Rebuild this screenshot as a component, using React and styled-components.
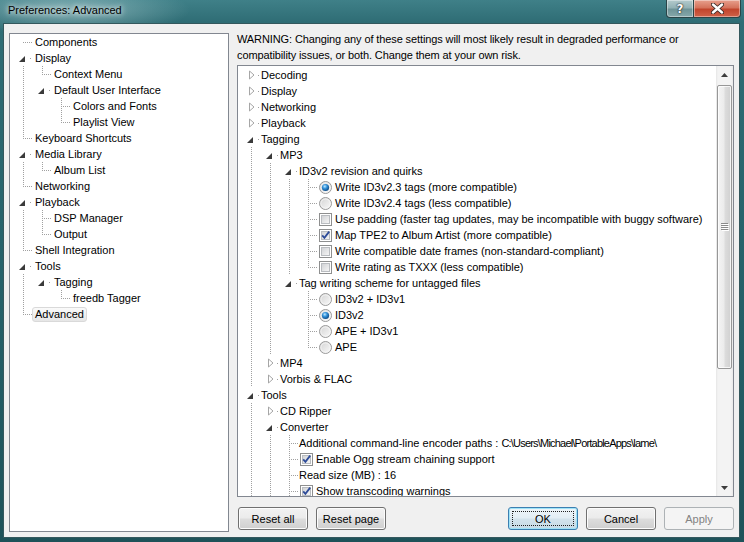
import React from 'react';
import styled, { createGlobalStyle, css } from 'styled-components';

const GlobalStyle = createGlobalStyle`
  html, body { margin: 0; padding: 0; }
  body { width: 744px; height: 542px; overflow: hidden; background: #1f565e; }
  * { box-sizing: border-box; }
`;

const FONT = `"Liberation Sans", Arial, sans-serif`;

const Window = styled.div`
  width: 744px;
  height: 542px;
  display: flex;
  flex-direction: column;
  padding: 0 4px 4px 3px;
  background:
    radial-gradient(ellipse 120px 26px at 70px 10px, rgba(190, 220, 222, 0.55), rgba(190, 220, 222, 0) 100%),
    linear-gradient(180deg, #3f8088 0px, #2f6d75 22px, #245f67 60%, #1e5259 100%);
  font-family: ${FONT};
  font-size: 11px;
  color: #000;
`;

const TitleBar = styled.div`
  height: 23px;
  flex: none;
  display: flex;
  align-items: flex-start;
  justify-content: space-between;
  padding-left: 5px;
`;

const Title = styled.span`
  font-family: ${FONT};
  font-size: 11px;
  line-height: 20px;
  color: #000;
  text-shadow: 0 0 5px rgba(255, 255, 255, 0.9), 0 0 9px rgba(255, 255, 255, 0.7);
`;

const CaptionGroup = styled.div`
  display: flex;
  margin-right: -1px;
`;

const CaptionButton = styled.div`
  width: ${(p) => p.$w}px;
  height: 18px;
  display: flex;
  align-items: center;
  justify-content: center;
  border: 1px solid #2a4447;
  border-top: none;
  box-shadow: inset 0 0 0 1px rgba(255, 255, 255, 0.4);
  color: #fff;
  font: bold 12px "DejaVu Sans", sans-serif;
  text-shadow: 0 0 2px #1a1a1a, 0 0 1px #000;
  ${(p) =>
    p.$close
      ? css`
          border-bottom-right-radius: 4px;
          border-left: none;
          background: linear-gradient(180deg, #e7a08e 0%, #d5735c 45%, #c1452d 55%, #cf6248 100%);
        `
      : css`
          border-bottom-left-radius: 4px;
          background: linear-gradient(180deg, #b4cbcd 0%, #93b2b5 45%, #6f9498 55%, #86a8ab 100%);
        `}
`;

const Client = styled.div`
  flex: 1;
  min-height: 0;
  display: flex;
  gap: 8px;
  padding: 7px 5px 5px 5px;
  background: #f0f0f0;
  border: 1px solid #34585d;
`;

const LeftTree = styled.div`
  width: 220px;
  flex: none;
  margin-top: 2px;
  border: 1px solid #828790;
  background: #fff;
  padding-left: 4px;
  overflow: hidden;
`;

const RightColumn = styled.div`
  flex: 1;
  min-width: 0;
  display: flex;
  flex-direction: column;
`;

const Warning = styled.p`
  margin: 0 0 2px 0;
  line-height: 16px;
  white-space: nowrap;
  letter-spacing: -0.11px;
`;

const ListBox = styled.div`
  flex: 1;
  min-height: 0;
  display: flex;
  border: 1px solid #828790;
  background: #fff;
  overflow: hidden;
`;

const TreeArea = styled.div`
  flex: 1;
  min-width: 0;
  padding: 1px 0 0 4px;
  overflow: hidden;
`;

const Row = styled.div`
  height: 16px;
  display: flex;
  align-items: center;
  white-space: nowrap;
`;

const Label = styled.span`
  line-height: 16px;
`;

const PathValue = styled.span`
  letter-spacing: -0.8px;
`;

const LeftLabel = styled.span`
  line-height: 13px;
  margin-left: -1px;
  padding: 0 2px;
  border: 1px solid transparent;
  border-radius: 3px;
  ${(p) =>
    p.$selected &&
    css`
      border-color: #d9d9d9;
      background: linear-gradient(180deg, #fafafa 0%, #e6e6e6 100%);
    `}
`;

const ControlBox = styled.span`
  display: inline-flex;
  width: 13px;
  height: 13px;
  margin: 0 3px 0 1px;
  flex: none;
`;

const ScrollBar = styled.div`
  width: 17px;
  flex: none;
  display: flex;
  flex-direction: column;
  align-items: center;
  background: linear-gradient(90deg, #e6e6e6 0px, #f3f3f3 2px, #f3f3f3 15px, #e9e9e9 17px);
`;

const ScrollArrow = styled.div`
  width: 17px;
  height: 17px;
  flex: none;
  display: flex;
  align-items: center;
  justify-content: center;
`;

const Thumb = styled.div`
  width: 15px;
  height: 284px;
  flex: none;
  margin-top: 2px;
  border: 1px solid #979797;
  border-radius: 2px;
  background: linear-gradient(90deg, #f4f4f4 0%, #ececec 45%, #dcdcdc 55%, #d0d0d0 100%);
  box-shadow: inset 0 0 0 1px rgba(255, 255, 255, 0.75);
  display: flex;
  align-items: center;
  justify-content: center;
`;

const Track = styled.div`
  flex: 1;
`;

const ButtonBar = styled.div`
  flex: none;
  display: flex;
  gap: 8px;
  margin: 10px 0 2px 0;
  padding-left: 1px;
`;

const Spacer = styled.div`
  flex: 1;
`;

const PushButton = styled.button`
  width: 70px;
  height: 23px;
  padding: 0;
  margin: 0;
  position: relative;
  font-family: ${FONT};
  font-size: 11px;
  color: #000;
  border: 1px solid #707070;
  border-radius: 3px;
  background: linear-gradient(180deg, #f2f2f2 0%, #ebebeb 48%, #dddddd 52%, #cfcfcf 100%);
  box-shadow: inset 0 0 0 1px #fcfcfc;
  ${(p) =>
    p.$default &&
    css`
      border-color: #3c7fb1;
      box-shadow: inset 0 0 0 1px #9fe3f8;
      background: linear-gradient(180deg, #eef5f9 0%, #e3eef5 48%, #d3e3ec 52%, #c6dae6 100%);
      &::after {
        content: '';
        position: absolute;
        inset: 3px;
        border: 1px dotted #222;
      }
    `}
  ${(p) =>
    p.disabled &&
    css`
      border-color: #adb2b5;
      background: #f4f4f4;
      box-shadow: none;
      color: #838383;
    `}
`;

/* ---------- drawings ---------- */

function Cell({ type }) {
  const dots = [];
  const v = (y0, y1) => {
    for (let y = y0; y < y1; y += 2) dots.push(<rect key={'v' + y} x="9" y={y} width="1" height="1" />);
  };
  const h = (x0, x1) => {
    for (let x = x0; x < x1; x += 2) dots.push(<rect key={'h' + x} x={x} y="8" width="1" height="1" />);
  };
  if (type === 'guide') v(0, 16);
  if (type === 'tee') {
    v(0, 16);
    h(11, 19);
  }
  if (type === 'elbow') {
    v(0, 9);
    h(11, 19);
  }
  if (type === 'first') h(9, 19);
  if (type === 'open' || type === 'closed') h(16, 17);
  return (
    <svg width="19" height="16" viewBox="0 0 19 16" style={{ flex: 'none' }} shapeRendering="crispEdges">
      <g fill="#a0a0a0">{dots}</g>
      {type === 'open' && <path d="M11 6 L11 12 L5 12 Z" fill="#3a3a3a" shapeRendering="auto" />}
      {type === 'closed' && (
        <path d="M7.5 4 L12 8 L7.5 12 Z" fill="#fff" stroke="#a6a6a6" strokeWidth="1" shapeRendering="auto" />
      )}
    </svg>
  );
}

function Radio({ on }) {
  return (
    <svg width="13" height="13" viewBox="0 0 13 13">
      <defs>
        <linearGradient id="radioFill" x1="0" y1="0" x2="1" y2="1">
          <stop offset="0" stopColor="#d2d2d2" />
          <stop offset="1" stopColor="#fbfbfb" />
        </linearGradient>
        <radialGradient id="radioDot" cx="0.4" cy="0.35" r="0.65">
          <stop offset="0" stopColor="#bfe9ff" />
          <stop offset="0.45" stopColor="#3594dc" />
          <stop offset="1" stopColor="#0c4a86" />
        </radialGradient>
      </defs>
      <circle cx="6.5" cy="6.5" r="6" fill="url(#radioFill)" stroke="#9a9a9a" />
      <circle cx="6.5" cy="6.5" r="4.6" fill="none" stroke="#f6f6f6" strokeWidth="0.8" />
      {on && <circle cx="6.5" cy="6.5" r="3.6" fill="url(#radioDot)" />}
    </svg>
  );
}

function Check({ on }) {
  return (
    <svg width="13" height="13" viewBox="0 0 13 13">
      <defs>
        <linearGradient id="checkFill" x1="0" y1="0" x2="1" y2="1">
          <stop offset="0" stopColor="#cfd1d4" />
          <stop offset="1" stopColor="#f7f7f7" />
        </linearGradient>
      </defs>
      <rect x="0.5" y="0.5" width="12" height="12" fill="#fff" stroke="#8e8f8f" />
      <rect x="2.5" y="2.5" width="8" height="8" fill="url(#checkFill)" stroke="#b9bcc0" />
      {on && <path d="M3.2 6.4 L5.4 8.9 L10.2 2.6" fill="none" stroke="#2d4b98" strokeWidth="1.8" />}
    </svg>
  );
}

function Control({ type }) {
  return (
    <ControlBox>
      {type === 'radio' && <Radio />}
      {type === 'radio-on' && <Radio on />}
      {type === 'check' && <Check />}
      {type === 'check-on' && <Check on />}
    </ControlBox>
  );
}

function ArrowIcon({ down }) {
  return (
    <svg width="7" height="4" viewBox="0 0 7 4">
      <path d={down ? 'M0 0 L7 0 L3.5 4 Z' : 'M0 4 L7 4 L3.5 0 Z'} fill="#3c3c3c" />
    </svg>
  );
}

function Gripper() {
  return (
    <svg width="8" height="8" viewBox="0 0 8 8" shapeRendering="crispEdges">
      {[0, 2, 4, 6].map((y) => (
        <g key={y}>
          <rect x="0" y={y} width="7" height="1" fill="#8a8a8a" />
          <rect x="1" y={y + 1} width="7" height="1" fill="#ffffff" />
        </g>
      ))}
    </svg>
  );
}

function CloseGlyph() {
  return (
    <svg width="13" height="11" viewBox="0 0 13 11">
      <path d="M2 1.5 L11 9.5 M11 1.5 L2 9.5" stroke="#3a2a26" strokeWidth="4.2" strokeLinecap="round" />
      <path d="M2 1.5 L11 9.5 M11 1.5 L2 9.5" stroke="#ffffff" strokeWidth="2.4" strokeLinecap="round" />
    </svg>
  );
}

/* ---------- data ---------- */

const leftRows = [
  { g: [], c: 'first', t: 'Components' },
  { g: [], c: 'open', t: 'Display' },
  { g: [1], c: 'elbow', t: 'Context Menu' },
  { g: [1], c: 'open', t: 'Default User Interface' },
  { g: [1, 0], c: 'tee', t: 'Colors and Fonts' },
  { g: [1, 0], c: 'elbow', t: 'Playlist View' },
  { g: [], c: 'elbow', t: 'Keyboard Shortcuts' },
  { g: [], c: 'open', t: 'Media Library' },
  { g: [1], c: 'elbow', t: 'Album List' },
  { g: [], c: 'elbow', t: 'Networking' },
  { g: [], c: 'open', t: 'Playback' },
  { g: [1], c: 'tee', t: 'DSP Manager' },
  { g: [1], c: 'elbow', t: 'Output' },
  { g: [], c: 'elbow', t: 'Shell Integration' },
  { g: [], c: 'open', t: 'Tools' },
  { g: [1], c: 'open', t: 'Tagging' },
  { g: [1, 0], c: 'elbow', t: 'freedb Tagger' },
  { g: [], c: 'elbow', t: 'Advanced', sel: true },
];

const rightRows = [
  { g: [], c: 'closed', t: 'Decoding' },
  { g: [], c: 'closed', t: 'Display' },
  { g: [], c: 'closed', t: 'Networking' },
  { g: [], c: 'closed', t: 'Playback' },
  { g: [], c: 'open', t: 'Tagging' },
  { g: [1], c: 'open', t: 'MP3' },
  { g: [1, 1], c: 'open', t: 'ID3v2 revision and quirks' },
  { g: [1, 1, 1], c: 'tee', k: 'radio-on', t: 'Write ID3v2.3 tags (more compatible)' },
  { g: [1, 1, 1], c: 'tee', k: 'radio', t: 'Write ID3v2.4 tags (less compatible)' },
  { g: [1, 1, 1], c: 'tee', k: 'check', t: 'Use padding (faster tag updates, may be incompatible with buggy software)' },
  { g: [1, 1, 1], c: 'tee', k: 'check-on', t: 'Map TPE2 to Album Artist (more compatible)' },
  { g: [1, 1, 1], c: 'tee', k: 'check', t: 'Write compatible date frames (non-standard-compliant)' },
  { g: [1, 1, 1], c: 'elbow', k: 'check', t: 'Write rating as TXXX (less compatible)' },
  { g: [1, 1], c: 'open', t: 'Tag writing scheme for untagged files' },
  { g: [1, 1, 0], c: 'tee', k: 'radio', t: 'ID3v2 + ID3v1' },
  { g: [1, 1, 0], c: 'tee', k: 'radio-on', t: 'ID3v2' },
  { g: [1, 1, 0], c: 'tee', k: 'radio', t: 'APE + ID3v1' },
  { g: [1, 1, 0], c: 'elbow', k: 'radio', t: 'APE' },
  { g: [1], c: 'closed', t: 'MP4' },
  { g: [1], c: 'closed', t: 'Vorbis & FLAC' },
  { g: [], c: 'open', t: 'Tools' },
  { g: [1], c: 'closed', t: 'CD Ripper' },
  { g: [1], c: 'open', t: 'Converter' },
  { g: [1, 1], c: 'tee', t: 'Additional command-line encoder paths : ', v: 'C:\\Users\\Michael\\PortableApps\\lame\\' },
  { g: [1, 1], c: 'tee', k: 'check-on', t: 'Enable Ogg stream chaining support' },
  { g: [1, 1], c: 'tee', t: 'Read size (MB) : 16' },
  { g: [1, 1], c: 'tee', k: 'check-on', t: 'Show transcoding warnings' },
];

function Guides({ g }) {
  return g.map((on, i) => <Cell key={i} type={on ? 'guide' : 'blank'} />);
}

export default function App() {
  return (
    <>
      <GlobalStyle />
      <Window>
        <TitleBar>
          <Title>Preferences: Advanced</Title>
          <CaptionGroup>
            <CaptionButton $w={28}>?</CaptionButton>
            <CaptionButton $w={47} $close>
              <CloseGlyph />
            </CaptionButton>
          </CaptionGroup>
        </TitleBar>
        <Client>
          <LeftTree>
            {leftRows.map((r, i) => (
              <Row key={i}>
                <Guides g={r.g} />
                <Cell type={r.c} />
                <LeftLabel $selected={r.sel}>{r.t}</LeftLabel>
              </Row>
            ))}
          </LeftTree>
          <RightColumn>
            <Warning>
              WARNING: Changing any of these settings will most likely result in degraded performance or
              <br />
              compatibility issues, or both. Change them at your own risk.
            </Warning>
            <ListBox>
              <TreeArea>
                {rightRows.map((r, i) => (
                  <Row key={i}>
                    <Guides g={r.g} />
                    <Cell type={r.c} />
                    {r.k && <Control type={r.k} />}
                    <Label>
                      {r.t}
                      {r.v && <PathValue>{r.v}</PathValue>}
                    </Label>
                  </Row>
                ))}
              </TreeArea>
              <ScrollBar>
                <ScrollArrow>
                  <ArrowIcon />
                </ScrollArrow>
                <Thumb>
                  <Gripper />
                </Thumb>
                <Track />
                <ScrollArrow>
                  <ArrowIcon down />
                </ScrollArrow>
              </ScrollBar>
            </ListBox>
            <ButtonBar>
              <PushButton>Reset all</PushButton>
              <PushButton>Reset page</PushButton>
              <Spacer />
              <PushButton $default>OK</PushButton>
              <PushButton>Cancel</PushButton>
              <PushButton disabled>Apply</PushButton>
            </ButtonBar>
          </RightColumn>
        </Client>
      </Window>
    </>
  );
}
